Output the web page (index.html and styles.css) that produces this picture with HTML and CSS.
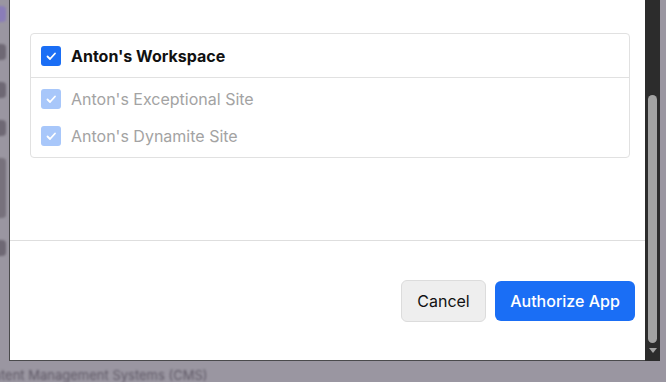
FILE: index.html
```html
<!DOCTYPE html>
<html lang="en">
<head>
    <meta charset="UTF-8">
    <meta name="viewport" content="width=device-width, initial-scale=1.0">
    <title>Authorize App</title>
    <link rel="stylesheet" href="styles.css">
</head>
<body>
    <div class="backdrop">
        <div class="side-nav">
            <span class="blob blob-purple"></span>
            <span class="blob"></span>
            <span class="blob"></span>
            <span class="blob"></span>
            <span class="blob blob-tall"></span>
            <span class="blob"></span>
        </div>
        <p class="backdrop-text">Content Management Systems (CMS)</p>
    </div>

    <div class="modal">
        <div class="modal-main">
            <div class="modal-body">
                <div class="scope-card">
                    <label class="scope-row scope-head">
                        <span class="check">
                            <svg viewBox="0 0 20 20" width="20" height="20"><path d="M6.5 10.5 L9 13 L14 7.5" /></svg>
                        </span>
                        Anton's Workspace
                    </label>
                    <div class="scope-list">
                        <label class="scope-row is-disabled">
                            <span class="check">
                                <svg viewBox="0 0 20 20" width="20" height="20"><path d="M6.5 10.5 L9 13 L14 7.5" /></svg>
                            </span>
                            Anton's Exceptional Site
                        </label>
                        <label class="scope-row is-disabled">
                            <span class="check">
                                <svg viewBox="0 0 20 20" width="20" height="20"><path d="M6.5 10.5 L9 13 L14 7.5" /></svg>
                            </span>
                            Anton's Dynamite Site
                        </label>
                    </div>
                </div>
            </div>

            <div class="modal-footer">
                <button class="btn btn-secondary">Cancel</button>
                <button class="btn btn-primary">Authorize App</button>
            </div>
        </div>

        <div class="scrollbar">
            <div class="scroll-thumb"></div>
            <div class="scroll-arrow"></div>
        </div>
    </div>
</body>
</html>
```

FILE: styles.css
```css
* {
    margin: 0;
    padding: 0;
    box-sizing: border-box;
}

body {
    font-family: Inter, 'Noto Sans', sans-serif;
    background: #9a96a1;
    width: 666px;
    height: 382px;
    overflow: hidden;
    position: relative;
}

/* page behind the overlay */
.backdrop {
    height: 100%;
    display: flex;
    flex-direction: column;
    justify-content: space-between;
    filter: blur(1.2px);
}

.side-nav {
    display: flex;
    flex-direction: column;
    gap: 22px;
    padding-top: 6px;
    margin-left: -8px;
}

.blob {
    display: block;
    width: 14px;
    height: 16px;
    border-radius: 4px;
    background: #6e6874;
}

.blob-purple {
    background: #8a7db8;
}

.blob-tall {
    height: 60px;
    background: #77717c;
}

.backdrop-text {
    font-size: 13px;
    color: #5f5966;
    margin-left: -24px;
    line-height: 20px;
    transform: translateY(3px);
    white-space: nowrap;
}

/* modal */
.modal {
    position: absolute;
    left: 9px;
    top: 0;
    width: 651px;
    height: 361px;
    display: flex;
    background: #fff;
    border-left: 1px solid #4a4a4c;
    border-bottom: 1px solid #4a4a4c;
}

.modal-main {
    flex: 1;
    display: flex;
    flex-direction: column;
}

.modal-body {
    padding: 33px 15px 0 20px;
    height: 241px;
    border-bottom: 1px solid #dedede;
}

.scope-card {
    border: 1px solid #e1e1e1;
    border-radius: 4px;
}

.scope-row {
    display: flex;
    align-items: center;
    gap: 10px;
    height: 37px;
    padding: 0 10px;
    font-size: 16px;
    color: #a3a3a3;
}

.scope-head {
    height: 44px;
    font-weight: 700;
    color: #111;
    border-bottom: 1px solid #e1e1e1;
    padding-top: 1px;
}

.scope-list {
    padding: 2px 0 3px;
}

.check {
    width: 20px;
    height: 20px;
    border-radius: 3px;
    background: #1a6ef5;
    display: flex;
}

.check path {
    fill: none;
    stroke: #fff;
    stroke-width: 1.8;
    stroke-linecap: round;
    stroke-linejoin: round;
}

.is-disabled .check {
    background: #a8c7fa;
}

.modal-footer {
    flex: 1;
    display: flex;
    justify-content: flex-end;
    align-items: flex-start;
    gap: 9px;
    padding: 39px 10px 0 0;
}

.btn {
    font-family: inherit;
    font-size: 16px;
    border-radius: 6px;
    cursor: pointer;
}

.btn-secondary {
    width: 85px;
    height: 42px;
    background: #eeeeee;
    border: 1px solid #dcdcdc;
    color: #111;
}

.btn-primary {
    width: 140px;
    height: 40px;
    margin-top: 1px;
    background: #1a6ef5;
    border: none;
    color: #fff;
    font-weight: 500;
}

/* scrollbar */
.scrollbar {
    width: 15px;
    background: #2c2c2c;
    display: flex;
    flex-direction: column;
    align-items: center;
    padding-top: 95px;
    margin-bottom: -1px;
}

.scroll-thumb {
    width: 9px;
    height: 248px;
    border-radius: 5px;
    background: #a3a3a3;
}

.scroll-arrow {
    margin-top: 5px;
    width: 0;
    height: 0;
    border-left: 4px solid transparent;
    border-right: 4px solid transparent;
    border-top: 5px solid #a3a3a3;
}
```
